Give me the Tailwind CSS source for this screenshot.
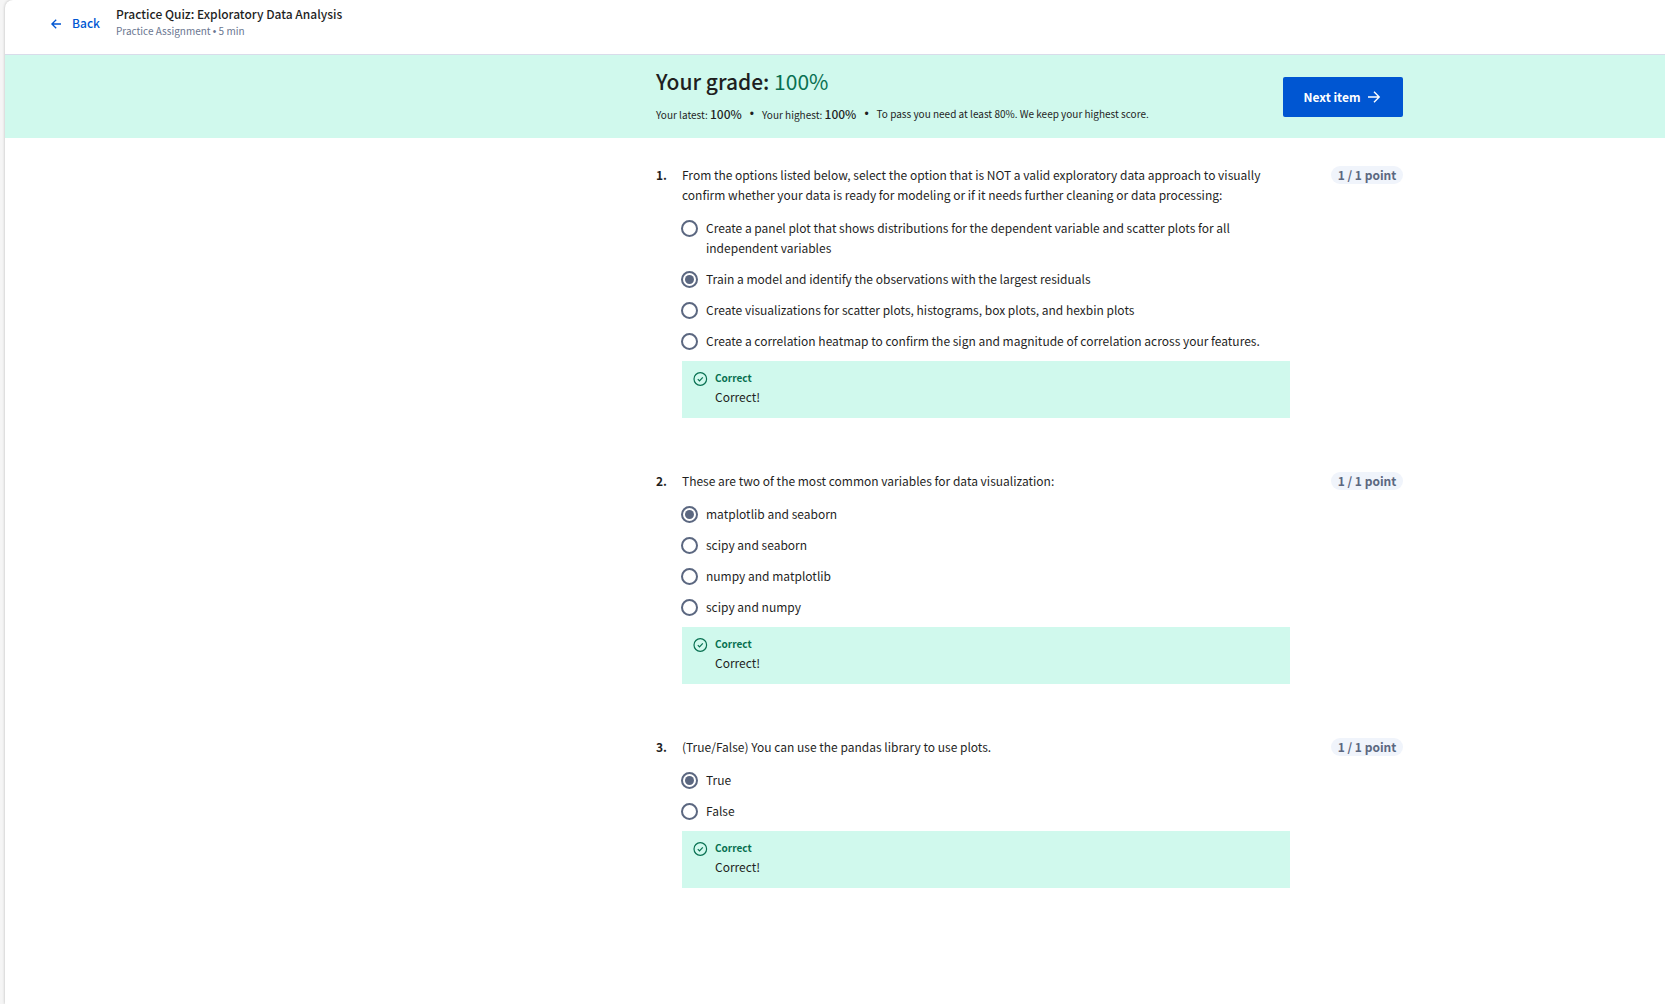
<!DOCTYPE html>
<html lang="en">
<head>
<meta charset="utf-8">
<meta name="viewport" content="width=device-width, initial-scale=1">
<title>Practice Quiz: Exploratory Data Analysis</title>
<script src="https://cdn.jsdelivr.net/npm/@tailwindcss/browser@4"></script>
</head>
<body class="min-h-screen bg-[#f5f5f5] pl-[5px] font-['Noto_Sans_CJK_SC','Noto_Sans',sans-serif] text-[12px] leading-5 text-[#1f1f1f]">
<div class="min-h-screen rounded-tl-lg bg-white shadow-[0_0_3px_rgba(0,0,0,0.25)]">
  <header class="flex h-[55px] items-start gap-4 border-b border-[#d9dcea] pl-[43px]">
    <a href="#" class="mt-[13px] flex items-center gap-2 font-medium text-[#0056d2]">
      <svg class="size-4" viewBox="0 0 16 16" fill="none" stroke="currentColor" stroke-width="1.3" aria-hidden="true"><path d="M13 9H4M8.2 4.7 3.9 9l4.3 4.3"/></svg>
      Back
    </a>
    <div class="mt-[5px]">
      <h1 class="text-[12px] leading-[18px] font-medium">Practice Quiz: Exploratory Data Analysis</h1>
      <p class="text-[10px] leading-4 text-[#6a7690]">Practice Assignment <span class="font-['Liberation_Sans',sans-serif]">•</span> 5 min</p>
    </div>
  </header>

  <section class="grid grid-cols-[651fr_minmax(0,747px)_262fr] bg-[#d0f9ed]">
    <div class="col-start-2 flex h-[83px] items-center justify-between">
      <div class="flex flex-col gap-[11px]">
        <h2 class="text-[21px] leading-6 font-medium">Your grade: <span class="font-normal text-[#087051]">100%</span></h2>
        <p class="flex gap-2 text-[10px]">
          <span>Your latest: <b class="text-[12px] font-medium">100%</b></span><span class="font-['Liberation_Sans',sans-serif] text-[12px]">•</span>
          <span>Your highest: <b class="text-[12px] font-medium">100%</b></span><span class="font-['Liberation_Sans',sans-serif] text-[12px]">•</span>
          <span>To pass you need at least 80%. We keep your highest score.</span>
        </p>
      </div>
      <button type="button" class="flex h-10 w-[120px] items-center justify-center gap-1.5 rounded-[2px] bg-[#0056d2] font-bold text-white">
        Next item
        <svg class="size-4" viewBox="0 0 16 16" fill="none" stroke="currentColor" stroke-width="1.4" aria-hidden="true"><path d="M2 8h11M8 2.8 13.2 8 8 13.2"/></svg>
      </button>
    </div>
  </section>

  <main class="grid grid-cols-[651fr_minmax(0,747px)_262fr]">
    <div id="quiz" class="col-start-2 flex flex-col gap-[53px] pt-[27px] pb-12"></div>
  </main>
</div>

<script>
const questions = [
  { text: 'From the options listed below, select the option that is NOT a valid exploratory data approach to visually confirm whether your data is ready for modeling or if it needs further cleaning or data processing:',
    chosen: 1,
    options: ['Create a panel plot that shows distributions for the dependent variable and scatter plots for all independent variables',
      'Train a model and identify the observations with the largest residuals',
      'Create visualizations for scatter plots, histograms, box plots, and hexbin plots',
      'Create a correlation heatmap to confirm the sign and magnitude of correlation across your features.'] },
  { text: 'These are two of the most common variables for data visualization:',
    chosen: 0,
    options: ['matplotlib and seaborn', 'scipy and seaborn', 'numpy and matplotlib', 'scipy and numpy'] },
  { text: '(True/False) You can use the pandas library to use plots.',
    chosen: 0,
    options: ['True', 'False'] }
];

const option = (label, q, i, chosen) => `
  <label class="flex items-start gap-2">
    <input type="radio" name="q${q}" ${i === chosen ? 'checked' : ''} class="-ml-px mt-0.5 size-[17px] shrink-0 appearance-none rounded-full border-2 border-[#5b6780] bg-white bg-clip-content p-[2px] checked:bg-[#5b6780]">
    <span>${label}</span>
  </label>`;

document.getElementById('quiz').innerHTML = questions.map((item, q) => `
  <section class="flex items-start">
    <span class="w-[26px] shrink-0 font-bold">${q + 1}.</span>
    <fieldset class="w-[608px] min-w-0">
      <legend class="mb-[13px] max-w-[590px]">${item.text}</legend>
      <div class="flex max-w-[590px] flex-col gap-[11px]">${item.options.map((o, i) => option(o, q, i, item.chosen)).join('')}</div>
      <div class="mt-2.5 flex h-[57px] gap-[7px] bg-[#d0f9ed] pt-2 pl-2.5">
        <svg class="mt-0.5 size-4 text-[#087051]" viewBox="0 0 16 16" fill="none" stroke="currentColor" stroke-width="1.2" aria-hidden="true"><circle cx="8.3" cy="8" r="6.3"/><path d="m5.8 8.2 1.7 1.7 3.3-3.5"/></svg>
        <div>
          <p class="text-[10px] leading-[18px] font-bold text-[#087051]">Correct</p>
          <p>Correct!</p>
        </div>
      </div>
    </fieldset>
    <span class="ml-auto flex h-[18px] w-[72px] shrink-0 mt-px items-center justify-center rounded-full bg-[#f0f4fb] font-bold text-[#5b6780]">1 / 1 point</span>
  </section>`).join('');
</script>
</body>
</html>
